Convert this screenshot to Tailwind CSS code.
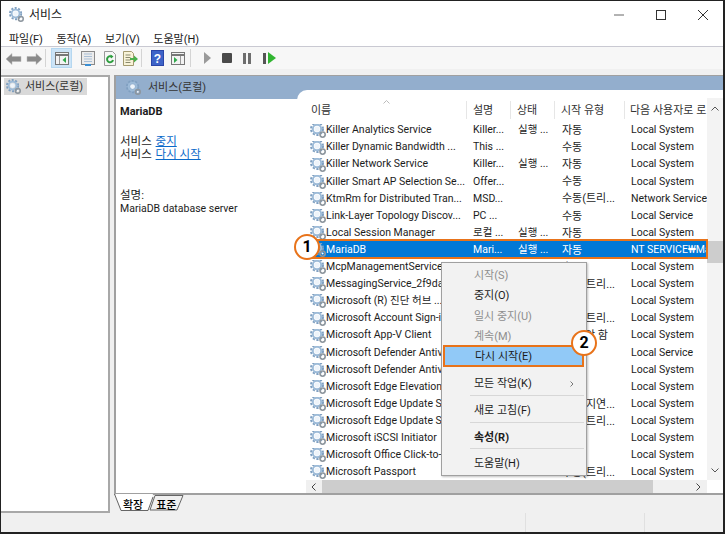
<!DOCTYPE html>
<html lang="ko">
<head>
  <meta charset="UTF-8" />
  <title>서비스</title>
  <script src="https://cdn.jsdelivr.net/npm/@tailwindcss/browser@4"></script>
</head>
<body class="bg-white">
  <svg class="hidden">
    <symbol id="gear" viewBox="0 0 16 16">
      <circle cx="7" cy="7" r="6" fill="none" stroke="#7f9fc0" stroke-width="2" stroke-dasharray="2.2 1.6"/>
      <circle cx="7" cy="7" r="4.2" fill="none" stroke="#9dbbd8" stroke-width="2"/>
      <circle cx="7" cy="7" r="2.6" fill="#eef4fa"/>
      <circle cx="12.6" cy="12.6" r="2.6" fill="none" stroke="#8d969e" stroke-width="1.6"/>
      <circle cx="12.6" cy="12.6" r="1" fill="#fff"/>
    </symbol>
  </svg>

  <div class="relative w-[725px] h-[534px] overflow-hidden flex flex-col bg-[#f0f0f0] border-t border-l border-r-2 border-b-2 border-[#222222] text-[11px] leading-none text-[#1c1c1c] font-['Roboto','Noto_Sans_CJK_KR',sans-serif]">
    <!-- title bar -->
    <div class="h-[27px] shrink-0 bg-white flex items-center pl-[8px]">
      <svg class="w-[15px] h-[15px]"><use href="#gear"/></svg>
      <span class="ml-[5px] text-[12px]">서비스</span>
      <div class="ml-auto -mr-[1px] flex items-center">
        <svg class="w-[42px] h-[14px]" viewBox="0 0 42 14"><path d="M16 7h10" stroke="#666" stroke-width="1"/></svg>
        <svg class="w-[42px] h-[14px]" viewBox="0 0 42 14"><rect x="16.5" y="2.5" width="9" height="9" fill="none" stroke="#333"/></svg>
        <svg class="w-[42px] h-[14px]" viewBox="0 0 42 14"><path d="M16 2l10 10M26 2L16 12" stroke="#333" fill="none"/></svg>
      </div>
    </div>
    <!-- menu -->
    <div class="h-[19px] shrink-0 bg-white flex items-center pl-[8px] pt-[5px] gap-[13.5px] border-b border-[#c9c9d2]">
      <span>파일(F)</span><span>동작(A)</span><span>보기(V)</span><span>도움말(H)</span>
    </div>
    <!-- toolbar -->
    <div class="h-[22px] shrink-0 bg-[#f7f7f7] flex items-center pl-[5px]">
      <svg class="w-[16px] h-[12px] mt-[2px]" viewBox="0 0 16 12"><path d="M0 6l6-5.5V3.5h9v5H6v3z" fill="#8a8a8a" stroke="#b5b5b5" stroke-width=".5"/></svg>
      <svg class="w-[16px] h-[12px] mt-[2px] ml-[4px]" viewBox="0 0 16 12"><path d="M16 6l-6-5.5V3.5H1v5h9v3z" fill="#8a8a8a" stroke="#b5b5b5" stroke-width=".5"/></svg>
      <div class="w-px h-[18px] bg-[#d4d4d4] ml-[3px]"></div>
      <div class="ml-[5px] w-[21px] h-[20px] bg-[#cce4f7] border border-[#b5d7f0] flex items-center justify-center">
        <svg class="w-[14px] h-[13px]" viewBox="0 0 14 13"><rect x=".5" y=".5" width="13" height="12" fill="#f3f3f3" stroke="#777"/><path d="M.5 3h13" stroke="#777" stroke-width="2"/><path d="M4.5 4v8" stroke="#999"/><path d="M11 5v6L7.5 8z" fill="#2fa84a"/></svg>
      </div>
      <svg class="ml-[9px] w-[14px] h-[15px]" viewBox="0 0 14 15"><rect x=".5" y=".5" width="13" height="13" fill="#ececec" stroke="#8a8a8a"/><path d="M3 3h8M3 5.5h8M3 8h8M3 10.5h8" stroke="#a9bfd6"/><path d="M4 14h6" stroke="#3b8fd4" stroke-width="2"/></svg>
      <svg class="ml-[8px] w-[14px] h-[15px]" viewBox="0 0 14 15"><path d="M1.5.5h8l3 3v11h-11z" fill="#f7f7f7" stroke="#999"/><path d="M10 9a3 3 0 1 1-1-3" fill="none" stroke="#2e9e3f" stroke-width="2"/><path d="M7.5 3.5l3 2-2.5 2z" fill="#2e9e3f"/></svg>
      <svg class="ml-[5px] w-[16px] h-[15px]" viewBox="0 0 16 15"><path d="M1.5.5h8l2 2v12h-10z" fill="#f8f3d8" stroke="#a39a70"/><path d="M3.5 4h5M3.5 6.5h5M3.5 9h5M3.5 11.5h5" stroke="#8a8a70"/><path d="M8 7h4V4.5L16 8l-4 3.5V9H8z" fill="#49b04b"/></svg>
      <div class="w-px h-[18px] bg-[#d4d4d4] ml-[3px]"></div>
      <svg class="ml-[9px] w-[13px] h-[16px]" viewBox="0 0 13 16"><rect width="13" height="16" fill="#2b45a8"/><rect x="1" y="1" width="11" height="14" fill="#3d63c8"/><text x="6.5" y="12.5" text-anchor="middle" font-size="12" font-weight="700" fill="#fff" font-family="Liberation Sans">?</text></svg>
      <svg class="ml-[7px] w-[14px] h-[13px]" viewBox="0 0 14 13"><rect x=".5" y=".5" width="13" height="12" fill="#f3f3f3" stroke="#777"/><path d="M.5 3h13" stroke="#777" stroke-width="2"/><path d="M9.5 4v8" stroke="#999"/><path d="M3 5v6l3.5-3z" fill="#2fa84a"/></svg>
      <div class="w-px h-[18px] bg-[#d4d4d4] ml-[5px]"></div>
      <svg class="ml-[13px] w-[8px] h-[12px]" viewBox="0 0 8 12"><path d="M0 0l7 6-7 6z" fill="#9a9a9a"/></svg>
      <div class="ml-[10px] w-[10px] h-[10px] bg-[#4a4a4a] rounded-[1px]"></div>
      <div class="ml-[11px] flex gap-[2px]"><div class="w-[3px] h-[11px] bg-[#6e6e6e]"></div><div class="w-[3px] h-[11px] bg-[#6e6e6e]"></div></div>
      <div class="ml-[12px] flex items-center gap-[2px]"><div class="w-[3px] h-[11px] bg-[#555555]"></div><svg class="w-[8px] h-[12px]" viewBox="0 0 8 12"><path d="M0 0l8 6-8 6z" fill="#31b531"/></svg></div>
    </div>

    <!-- panes -->
    <div class="flex flex-1 min-h-0 pt-[6px]">
      <div class="w-[109px] shrink-0 bg-white border-2 border-l-0 border-[#a8a8a8] pt-[1px] pl-[3px]">
        <div class="w-[83px] h-[17px] bg-[#d9d9d9] flex items-center pl-[2px]">
          <svg class="w-[15px] h-[15px]"><use href="#gear"/></svg>
          <span class="ml-[4px] text-[#333333]">서비스(로컬)</span>
        </div>
      </div>
      <div class="ml-[4px] flex-1 min-w-0 flex flex-col">
        <div class="h-[420px] flex flex-col bg-white border-l-2 border-b-2 border-t border-[#a0a0a0]">
          <div class="h-[23px] shrink-0 bg-[#93aecd] flex items-center pl-[10px]">
            <svg class="w-[15px] h-[15px]"><use href="#gear"/></svg>
            <span class="ml-[7px] text-[#333333]">서비스(로컬)</span>
          </div>
          <div class="flex flex-1 min-h-0">
            <div class="w-[181px] shrink-0 pl-[4px] pt-[6px] leading-[13.5px] text-[10.5px]">
              <div class="font-bold text-[11px]">MariaDB</div>
              <div class="mt-[16px] text-[11.5px]">서비스 <a class="ml-[1px] text-[#0a69c9] underline">중지</a></div>
              <div class="text-[11.5px]">서비스 <a class="ml-[1px] text-[#0a69c9] underline">다시 시작</a></div>
              <div class="mt-[27px] text-[11.5px]">설명:</div>
              <div>MariaDB database server</div>
            </div>
            <div class="relative flex-1 min-w-0 -mt-[9px] bg-white rounded-tl-[10px] overflow-hidden flex flex-col">
              <div class="flex flex-1 min-h-0">
                <div class="relative flex-1 min-w-0 ml-[9px] overflow-hidden">
                  <svg class="absolute left-[77px] top-[10px] w-[7px] h-[4px]" viewBox="0 0 7 4"><path d="M.5 3.5L3.5 .5l3 3" fill="none" stroke="#bbbbbb"/></svg>
                  <div class="h-[31px] pt-[11px] flex items-start text-[#333333] whitespace-nowrap">
                    <div class="w-[161px] pl-[5px] h-[18px] flex items-center border-r border-[#e6e6e6]">이름</div>
                    <div class="w-[44px] pl-[6px] h-[18px] flex items-center border-r border-[#e6e6e6]">설명</div>
                    <div class="w-[44px] pl-[6px] h-[18px] flex items-center border-r border-[#e6e6e6]">상태</div>
                    <div class="w-[70px] pl-[6px] h-[18px] flex items-center border-r border-[#e6e6e6]">시작 유형</div>
                    <div class="pl-[5px] h-[18px] flex items-center">다음 사용자로 로</div>
                  </div>
                  <div id="rows"></div>
                </div>
                <div class="relative w-[16px] shrink-0 mt-[8px] bg-[#f3f3f3] flex flex-col items-center justify-between pt-[8px] pb-[7px]">
                  <svg class="w-[8px] h-[5px]" viewBox="0 0 8 5"><path d="M.5 4.5L4 1l3.5 3.5" fill="none" stroke="#555"/></svg>
                  <div class="absolute top-[143px] left-0 w-[16px] h-[22px] bg-[#cdcdcd]"></div>
                  <svg class="w-[8px] h-[5px]" viewBox="0 0 8 5"><path d="M.5.5L4 4 7.5.5" fill="none" stroke="#555"/></svg>
                </div>
              </div>
              <div class="h-[13px] shrink-0 bg-[#f0f0f0] flex items-center ml-[9px] mr-[16px]">
                <svg class="ml-[5px] w-[5px] h-[8px]" viewBox="0 0 5 8"><path d="M4.5.5L1 4l3.5 3.5" fill="none" stroke="#444"/></svg>
                <div class="ml-[6px] w-[331px] h-[13px] bg-[#cdcdcd]"></div>
                <svg class="ml-[43px] w-[5px] h-[8px]" viewBox="0 0 5 8"><path d="M.5.5L4 4 .5 7.5" fill="none" stroke="#444"/></svg>
              </div>
            </div>
          </div>
        </div>
        <!-- tabs -->
        <div class="relative h-[18px] pt-[2px] shrink-0 flex items-center font-medium text-black">
          <svg class="absolute left-0 top-[-1px] w-[72px] h-[19px]" viewBox="0 0 72 19"><path d="M1 0L7.5 16H33.5L39 0z" fill="#fff"/><path d="M0.5 0L7 16.5H34L39 3 M36 16L41 1.5H69L63 16H36" fill="none" stroke="#666666"/></svg>
          <span class="relative ml-[9px]">확장</span>
          <span class="relative ml-[13px]">표준</span>
        </div>
      </div>
    </div>
    <!-- status bar -->
    <div class="h-[19px] shrink-0 flex">
      <div class="w-[525px] border-r border-[#e0e0e0]"></div>
      <div class="w-[119px] border-r border-[#e0e0e0]"></div>
    </div>

    <!-- selected row highlight -->
    <div class="absolute z-20 left-[305px] top-[238px] w-[402px] h-[20px] border-2 border-[#e8731a]"></div>
    <div class="absolute z-20 left-[293px] top-[233px] w-[26px] h-[26px] rounded-full border-[2.5px] border-[#e8731a] bg-white flex items-center justify-center text-[16px] font-bold text-black">1</div>

    <!-- context menu -->
    <div class="absolute z-20 left-[440px] top-[261px] w-[146px] h-[214px] bg-[#f2f2f2] border border-[#a0a0a0] shadow-[1px_1px_2px_rgba(0,0,0,0.25)]">
      <div class="h-[20.5px] pl-[32px] pt-[4px] flex items-center text-[#8e8e8e]">시작(S)</div>
      <div class="h-[20.5px] pl-[32px] pt-[4px] flex items-center">중지(O)</div>
      <div class="h-[20.5px] pl-[32px] pt-[4px] flex items-center text-[#8e8e8e]">일시 중지(U)</div>
      <div class="h-[20.5px] pl-[32px] pt-[4px] flex items-center text-[#8e8e8e]">계속(M)</div>
      <div class="h-[22px] ml-[1px] mr-[2px] pl-[30px] flex items-center bg-[#91c9f7] border-2 border-[#e8731a]">다시 시작(E)</div>
      <div class="h-[28px] pl-[32px] pr-[12px] pt-[5px] flex items-center justify-between">
        <span>모든 작업(K)</span>
        <svg class="w-[4px] h-[6px]" viewBox="0 0 4 6"><path d="M.5.5L3 3 .5 5.5" fill="none" stroke="#777"/></svg>
      </div>
      <div class="h-px ml-[28px] mr-[2px] bg-[#d7d7d7]"></div>
      <div class="h-[26px] pl-[32px] pt-[2px] flex items-center">새로 고침(F)</div>
      <div class="h-px ml-[28px] mr-[2px] bg-[#d7d7d7]"></div>
      <div class="h-[25px] pl-[32px] pt-[3px] flex items-center font-bold">속성(R)</div>
      <div class="h-px ml-[28px] mr-[2px] bg-[#d7d7d7]"></div>
      <div class="h-[25px] pl-[32px] pt-[4px] flex items-center">도움말(H)</div>
    </div>
    <div class="absolute z-20 left-[570px] top-[329px] w-[26px] h-[26px] rounded-full border-[2.5px] border-[#e8731a] bg-white flex items-center justify-center text-[16px] font-bold text-black">2</div>
  </div>

  <script>
    const rows = [
      ["Killer Analytics Service", "Killer...", "실행 ...", "자동", "Local System"],
      ["Killer Dynamic Bandwidth ...", "This ...", "", "수동", "Local System"],
      ["Killer Network Service", "Killer...", "실행 ...", "자동", "Local System"],
      ["Killer Smart AP Selection Se...", "Offer...", "", "수동", "Local System"],
      ["KtmRm for Distributed Tran...", "MSD...", "", "수동(트리...", "Network Service"],
      ["Link-Layer Topology Discov...", "PC ...", "", "수동", "Local Service"],
      ["Local Session Manager", "로컬 ...", "실행 ...", "자동", "Local System"],
      ["MariaDB", "Mari...", "실행 ...", "자동", "NT SERVICE₩MariaDB"],
      ["McpManagementService", "", "", "수동", "Local System"],
      ["MessagingService_2f9da", "", "", "수동(트리...", "Local System"],
      ["Microsoft (R) 진단 허브 ...", "", "", "수동", "Local System"],
      ["Microsoft Account Sign-in", "", "", "수동(트리...", "Local System"],
      ["Microsoft App-V Client", "", "", "사용 안 함", "Local System"],
      ["Microsoft Defender Antivirus", "", "", "수동", "Local Service"],
      ["Microsoft Defender Antivirus", "", "", "수동", "Local System"],
      ["Microsoft Edge Elevation", "", "", "수동", "Local System"],
      ["Microsoft Edge Update Service", "", "", "자동(지연...", "Local System"],
      ["Microsoft Edge Update Service", "", "", "수동(트리...", "Local System"],
      ["Microsoft iSCSI Initiator", "", "", "수동", "Local System"],
      ["Microsoft Office Click-to-Run", "", "", "자동", "Local System"],
      ["Microsoft Passport", "", "", "수동(트리...", "Local System"]
    ];
    document.getElementById("rows").innerHTML = rows.map((r) => {
      const selected = r[0] === "MariaDB";
      return `<div class="h-[17.1px] pt-[2px] flex items-center whitespace-nowrap text-[10.5px] ${selected ? "bg-[#0078d7] text-white" : ""}">
        <div class="w-[167px] shrink-0 pl-[4px] flex items-center overflow-hidden">
          <svg class="w-[16px] h-[16px] shrink-0 -mt-[2px]"><use href="#gear"/></svg>
          <span>${r[0]}</span>
        </div>
        <div class="w-[45px] shrink-0">${r[1]}</div>
        <div class="w-[44px] shrink-0">${r[2]}</div>
        <div class="w-[69px] shrink-0 text-[11px]">${r[3]}</div>
        <div>${r[4]}</div>
      </div>`;
    }).join("");
  </script>
</body>
</html>
